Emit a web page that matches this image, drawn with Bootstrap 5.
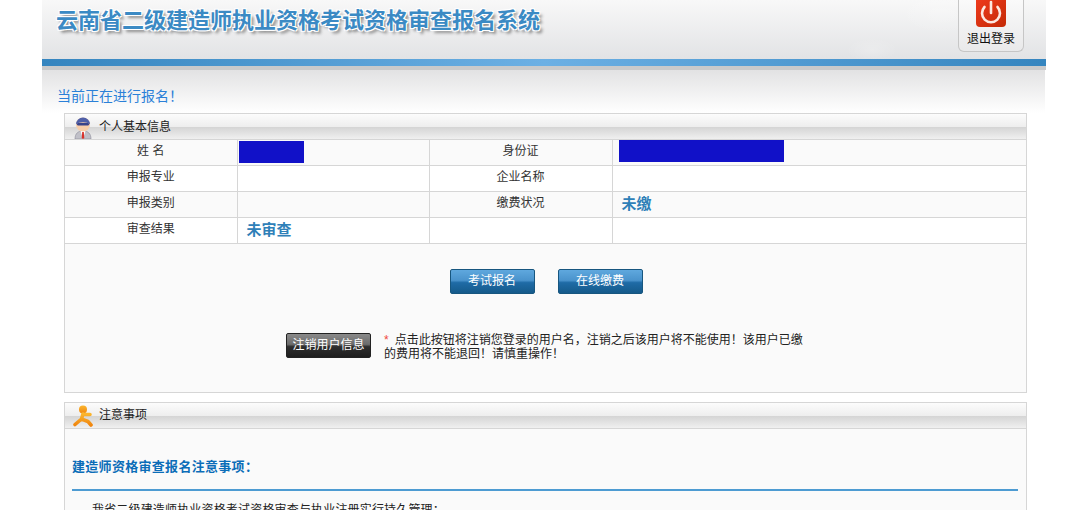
<!DOCTYPE html>
<html lang="zh">
<head>
<meta charset="utf-8">
<title>云南省二级建造师执业资格考试资格审查报名系统</title>
<link href="https://cdn.jsdelivr.net/npm/bootstrap@5.3.0/dist/css/bootstrap.min.css" rel="stylesheet">
<style>
html,body{height:510px;overflow:hidden;background:#fff;}
body{font-family:"Liberation Sans","Noto Sans CJK SC",sans-serif;font-size:12px;line-height:1.2;color:#222;}
.page-wrap{width:1004px;margin-left:42px;}
.top-head{height:59px;background:
 radial-gradient(ellipse 22px 30px at 935px 22px,rgba(255,255,255,.28),transparent),
 radial-gradient(ellipse 45px 22px at 900px 12px,rgba(255,255,255,.2),transparent),
 radial-gradient(ellipse 26px 12px at 830px 50px,rgba(255,255,255,.2),transparent),
 linear-gradient(#f8f8f8 0,#e2e3e5 100%);}
.sys-title{margin:7px 0 0 14px;font-size:22px;line-height:28px;font-weight:700;color:#3b8ac4;white-space:nowrap;
 text-shadow:1px 1px 0 #fff,-1px -1px 0 #fff,1px -1px 0 #fff,-1px 1px 0 #fff,3px 3px 3px #8a8a8a;}
.logout-box{width:66px;height:52px;margin-right:22px;background:linear-gradient(#fafafa,#e9e9ea);border:1px solid #c6c6c6;border-top:0;border-radius:0 0 6px 6px;color:#111;font-size:12px;}
.power-ico{width:30px;height:28px;display:block;}
.blue-bar{height:7px;background:linear-gradient(90deg,#3585bf 0,#6cb0e4 50%,#3585bf 100%);}
.bar-shade{height:4px;background:#c9cacb;}
.notice-zone{width:1003px;height:43px;background:linear-gradient(#e2e2e3,#fff);padding:17px 0 0 15px;}
.notice-text{font-size:14px;line-height:18px;color:#2a80d8;}
.info-panel{width:963px;margin-left:22px;background:#fafafa;border:1px solid #d6d6d6;}
.panel-one{height:280px;}
.panel-two{height:120px;margin-top:9px;border-bottom:0;}
.panel-head{height:26px;border-bottom:1px solid #d6d6d6;background:linear-gradient(#fcfcfc 0,#eeeeee 50%,#d4d4d4 52%,#f0f0f0 100%);padding:0 0 0 8px;color:#222;}
.panel-one .panel-head{padding-top:2px;}
.head-ico{width:20px;height:22px;margin-right:6px;}
.data-grid{width:961px;table-layout:fixed;border-collapse:collapse;margin:0;}
.data-grid td{height:26px;padding:0 0 1px;border:solid #d6d6d6;border-width:0 0 1px 1px;text-align:center;vertical-align:middle;color:#333;}
.data-grid tr:first-child td{height:25px;padding-bottom:2px;}
.data-grid td:first-child{border-left:0;}
.data-grid tr:nth-child(odd) td{background:#fafafa;}
.data-grid tr:nth-child(even) td{background:#fff;}
.data-grid td.val-cell{text-align:left;}
.data-grid tr td.mask-cell{padding:0;vertical-align:top;}
.mask-a{width:65px;height:22px;background:#1111c8;margin:1px 0 0 1px;}
.mask-b{width:165px;height:22px;background:#1111c8;margin:0 0 0 6px;}
.status-tag{font-size:15px;font-weight:700;color:#2f80b8;padding-left:9px;}
.action-row{padding-top:25px;gap:23px;margin-left:1px;}
.blue-act{width:85px;height:25px;padding:0;color:#fff;font-size:12px;line-height:23px;border:1px solid #17567f;border-radius:2px;
 background:linear-gradient(#5fa8de 0,#4a93cc 45%,#1f6ba6 55%,#155a8a 100%);}
.blue-act:hover{color:#fff;}
.cancel-row{margin:39px 0 0 221px;}
.dark-act{width:85px;height:25px;padding:0;color:#fff;font-size:12px;border:1px solid #222;border-radius:2px;line-height:23px;background:linear-gradient(#8a8a8a 0,#6c6c6c 45%,#2e2e2e 55%,#1e1e1e 100%);}
.dark-act:hover{color:#fff;}
.warn-text{width:428px;margin:0 0 0 13px;line-height:14px;color:#222;}
.warn-star{color:#f0483c;font-family:"Liberation Sans",sans-serif;font-size:12px;margin-right:6px;}
.note-title{margin:30px 0 0 7px;font-size:13px;line-height:16px;font-weight:700;color:#0b6db8;letter-spacing:.3px;}
.note-rule{height:2px;margin:14px 8px 0 7px;background:#4d9bd2;}
.note-body{margin:11px 0 0 27px;font-size:12px;line-height:16px;color:#222;white-space:nowrap;letter-spacing:.17px;}
</style>
</head>
<body>
<div class="page-wrap">
  <header class="top-head d-flex justify-content-between align-items-start">
    <div class="sys-title">云南省二级建造师执业资格考试资格审查报名系统</div>
    <a class="logout-box d-flex flex-column align-items-center text-decoration-none" href="#">
      <svg class="power-ico" viewBox="0 0 30 28" aria-hidden="true">
        <defs><linearGradient id="pg" x1="0" y1="0" x2="1" y2="1"><stop offset="0" stop-color="#ee3a1c"/><stop offset="1" stop-color="#c42a06"/></linearGradient></defs>
        <path d="M0 0H30V23a4 4 0 0 1-4 4H4a4 4 0 0 1-4-4Z" fill="url(#pg)"/>
        <path d="M8.500 7a9 9 0 1 0 13 0" fill="none" stroke="#fde8e0" stroke-width="2.600" stroke-linecap="round"/>
        <path d="M15 2V13" stroke="#fde8e0" stroke-width="2.600" stroke-linecap="round"/>
      </svg>
      <span class="mt-1">退出登录</span>
    </a>
  </header>
  <div class="blue-bar"></div>
  <div class="bar-shade"></div>
  <div class="notice-zone"><div class="notice-text">当前正在进行报名！</div></div>

  <section class="info-panel panel-one">
    <div class="panel-head d-flex align-items-center">
      <svg class="head-ico" viewBox="0 0 20 22" aria-hidden="true">
        <path d="M2 22C2 16.500 5 14 10 14S18 16.500 18 22Z" fill="#c0c0c8" stroke="#8c8c98" stroke-width=".6"/>
        <path d="M7.500 14H12.500L10 22Z" fill="#fff"/>
        <path d="M9.200 15H10.800L11.300 21 10 22 8.700 21Z" fill="#d8322a"/>
        <circle cx="10" cy="7.500" r="7" fill="#f8cda8"/>
        <path d="M3 7.500A7 7 0 0 1 17 7.500C14 4.500 6 4.500 3 7.500Z" fill="#4f5fa8"/>
        <rect x="4" y="6" width="12" height="2.400" rx="1.200" fill="#38438a"/>
      </svg>
      <span>个人基本信息</span>
    </div>
    <table class="data-grid">
      <colgroup><col style="width:172px"><col style="width:192px"><col style="width:183px"><col></colgroup>
      <tbody>
        <tr><td>姓 名</td><td class="val-cell mask-cell"><div class="mask-a"></div></td><td>身份证</td><td class="val-cell mask-cell"><div class="mask-b"></div></td></tr>
        <tr><td>申报专业</td><td></td><td>企业名称</td><td></td></tr>
        <tr><td>申报类别</td><td></td><td>缴费状况</td><td class="val-cell"><span class="status-tag">未缴</span></td></tr>
        <tr><td>审查结果</td><td class="val-cell"><span class="status-tag">未审查</span></td><td></td><td></td></tr>
      </tbody>
    </table>
    <div class="action-row d-flex justify-content-center">
      <button type="button" class="btn blue-act">考试报名</button>
      <button type="button" class="btn blue-act">在线缴费</button>
    </div>
    <div class="cancel-row d-flex align-items-start">
      <button type="button" class="btn dark-act">注销用户信息</button>
      <div class="warn-text"><span class="warn-star">*</span>点击此按钮将注销您登录的用户名，注销之后该用户将不能使用！该用户已缴的费用将不能退回！请慎重操作！</div>
    </div>
  </section>

  <section class="info-panel panel-two">
    <div class="panel-head d-flex align-items-center">
      <svg class="head-ico" viewBox="0 0 20 22" aria-hidden="true">
        <defs><linearGradient id="og" x1="0" y1="0" x2="0" y2="1"><stop offset="0" stop-color="#fbb62e"/><stop offset="1" stop-color="#f0860f"/></linearGradient></defs>
        <circle cx="10" cy="4.500" r="4" fill="url(#og)"/>
        <path d="M10 9 8.500 14 2 19.500M8.500 14 15 16.500 18 20M10 9.500H17" fill="none" stroke="url(#og)" stroke-width="3.600" stroke-linecap="round" stroke-linejoin="round"/>
      </svg>
      <span>注意事项</span>
    </div>
    <div class="note-title">建造师资格审查报名注意事项：</div>
    <div class="note-rule"></div>
    <div class="note-body">我省二级建造师执业资格考试资格审查与执业注册实行持久管理：</div>
  </section>
</div>
</body>
</html>
